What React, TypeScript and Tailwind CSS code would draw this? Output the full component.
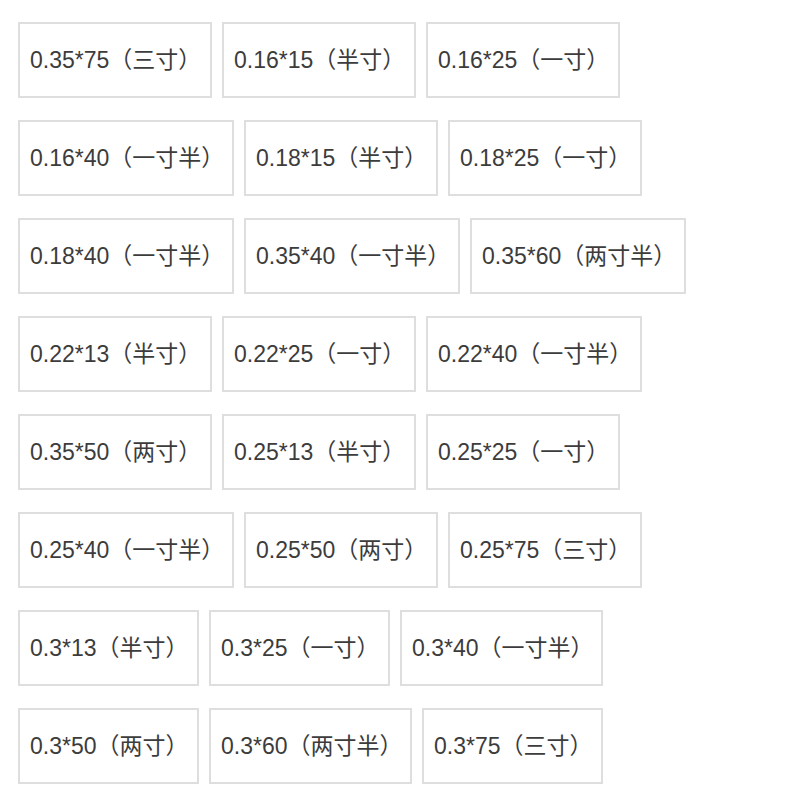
const rows: { label: string; w: number }[][] = [
  [
    { label: '0.35*75（三寸）', w: 194 },
    { label: '0.16*15（半寸）', w: 194 },
    { label: '0.16*25（一寸）', w: 194 },
  ],
  [
    { label: '0.16*40（一寸半）', w: 216 },
    { label: '0.18*15（半寸）', w: 194 },
    { label: '0.18*25（一寸）', w: 194 },
  ],
  [
    { label: '0.18*40（一寸半）', w: 216 },
    { label: '0.35*40（一寸半）', w: 216 },
    { label: '0.35*60（两寸半）', w: 216 },
  ],
  [
    { label: '0.22*13（半寸）', w: 194 },
    { label: '0.22*25（一寸）', w: 194 },
    { label: '0.22*40（一寸半）', w: 216 },
  ],
  [
    { label: '0.35*50（两寸）', w: 194 },
    { label: '0.25*13（半寸）', w: 194 },
    { label: '0.25*25（一寸）', w: 194 },
  ],
  [
    { label: '0.25*40（一寸半）', w: 216 },
    { label: '0.25*50（两寸）', w: 194 },
    { label: '0.25*75（三寸）', w: 194 },
  ],
  [
    { label: '0.3*13（半寸）', w: 181 },
    { label: '0.3*25（一寸）', w: 181 },
    { label: '0.3*40（一寸半）', w: 203 },
  ],
  [
    { label: '0.3*50（两寸）', w: 181 },
    { label: '0.3*60（两寸半）', w: 203 },
    { label: '0.3*75（三寸）', w: 181 },
  ],
]

export default function App() {
  return (
    <div
      className="min-h-[800px] bg-white pl-[18px] pt-[22px] text-[#3c3c3c]"
      style={{ fontFamily: '"Liberation Sans", "Noto Sans CJK SC", sans-serif' }}
    >
      <div className="flex flex-col gap-[22px]">
        {rows.map((row, i) => (
          <div key={i} className="flex gap-[10px]">
            {row.map((item) => (
              <div
                key={item.label}
                className="h-[76px] flex items-center border-2 border-[#dedede] pl-[10px] text-[23px] whitespace-nowrap overflow-hidden"
                style={{ width: item.w }}
              >
                {item.label}
              </div>
            ))}
          </div>
        ))}
      </div>
    </div>
  )
}
